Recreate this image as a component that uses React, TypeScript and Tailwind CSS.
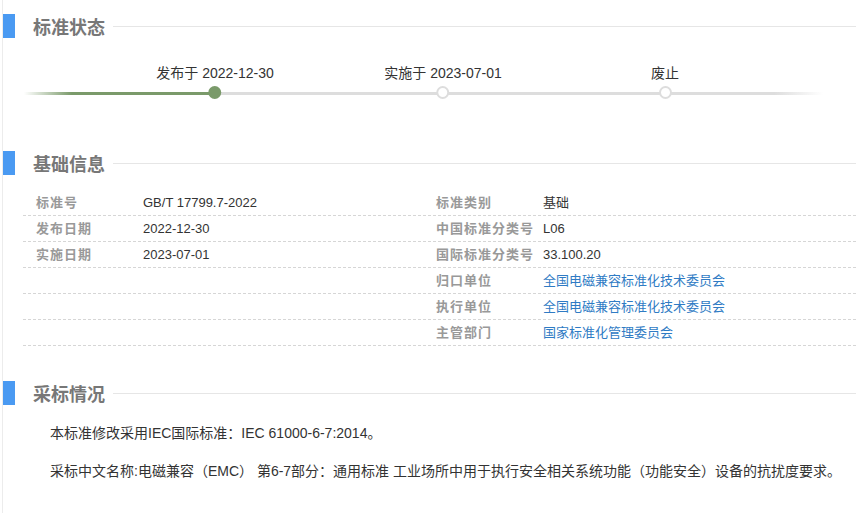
import React from "react";

const font = "font-['Liberation_Sans','Noto_Sans_CJK_SC',sans-serif]";

const SectionTitle = ({ title }: { title: string }) => (
  <div className="flex items-center h-[24px]">
    <div className="w-[12px] h-[24px] bg-[#4a9af2]" />
    <h2 className="ml-[18px] pt-[3px] text-[18px] leading-[24px] font-bold text-[#777]">{title}</h2>
    <div className="ml-[8px] flex-1 h-px bg-[#e6e6e6]" />
  </div>
);

interface Stop {
  label: string;
  left: number;
  done: boolean;
}

const stops: Stop[] = [
  { label: "发布于 2022-12-30", left: 212, done: true },
  { label: "实施于 2023-07-01", left: 440, done: false },
  { label: "废止", left: 662, done: false },
];

const rows: { l?: [string, string]; r: [string, string, boolean?] }[] = [
  { l: ["标准号", "GB/T 17799.7-2022"], r: ["标准类别", "基础"] },
  { l: ["发布日期", "2022-12-30"], r: ["中国标准分类号", "L06"] },
  { l: ["实施日期", "2023-07-01"], r: ["国际标准分类号", "33.100.20"] },
  { r: ["归口单位", "全国电磁兼容标准化技术委员会", true] },
  { r: ["执行单位", "全国电磁兼容标准化技术委员会", true] },
  { r: ["主管部门", "国家标准化管理委员会", true] },
];

const Label = ({ text }: { text?: string }) => (
  <div className="w-[107px] pl-[13px] text-[13px] font-bold tracking-[1px] text-[#999] whitespace-nowrap">
    {text}
  </div>
);

export default function App() {
  return (
    <div className={`${font} min-h-[513px] bg-white ml-[2px] border-l border-[#ececec] pt-[14px] overflow-hidden`}>
      <SectionTitle title="标准状态" />

      {/* timeline */}
      <div className="relative h-[113px]">
        <div className="absolute left-[21px] top-[54px] w-[191px] h-[3px] bg-[linear-gradient(to_right,rgba(122,154,106,0),#7a9a6a_25%,#7a9a6a)]" />
        <div className="absolute left-[212px] top-[54px] w-[608px] h-[3px] bg-[linear-gradient(to_right,#dddddd,#dddddd_92%,rgba(221,221,221,0))]" />
        {stops.map((s) => (
          <div
            key={s.label}
            className="absolute top-[25px] flex flex-col items-center -translate-x-1/2"
            style={{ left: s.left }}
          >
            <span className="text-[14px] leading-[20px] text-[#333] whitespace-nowrap">{s.label}</span>
            <span
              className={
                s.done
                  ? "mt-[3px] w-[13px] h-[13px] rounded-full bg-[#7a9a6a]"
                  : "mt-[3px] w-[13px] h-[13px] rounded-full bg-white border-2 border-[#dddddd]"
              }
            />
          </div>
        ))}
      </div>

      <SectionTitle title="基础信息" />

      <div className="ml-[20px] mt-[15px]">
        {rows.map((row, i) => (
          <div key={i} className="flex items-center h-[26px] border-b border-dashed border-[#d6d6d6]">
            <Label text={row.l?.[0]} />
            <div className="w-[293px] pl-[13px] text-[13px] text-[#333]">{row.l?.[1]}</div>
            <Label text={row.r[0]} />
            <div className={`pl-[13px] text-[13px] ${row.r[2] ? "text-[#2f7bc4]" : "text-[#333]"}`}>
              {row.r[1]}
            </div>
          </div>
        ))}
      </div>

      <div className="mt-[35px]">
        <SectionTitle title="采标情况" />
      </div>

      <div className="pl-[47px] text-[14px] leading-[24px] text-[#333]">
        <p className="mt-[16px]">本标准修改采用IEC国际标准：IEC 61000-6-7:2014。</p>
        <p className="mt-[14px] whitespace-nowrap">
          采标中文名称:电磁兼容（EMC） 第6-7部分：通用标准 工业场所中用于执行安全相关系统功能（功能安全）设备的抗扰度要求。
        </p>
      </div>
    </div>
  );
}
